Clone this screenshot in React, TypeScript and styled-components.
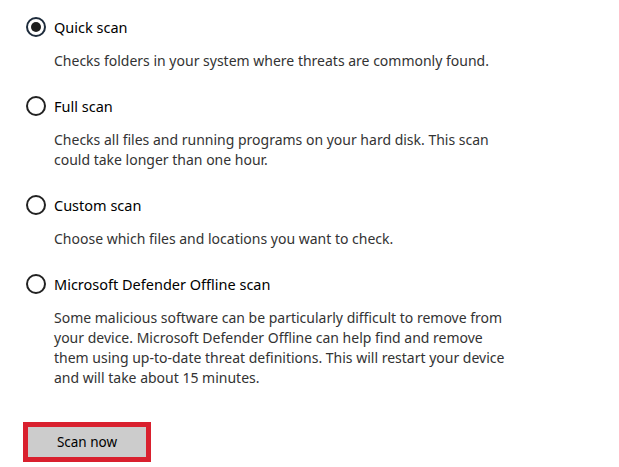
import React from "react";
import styled, { createGlobalStyle } from "styled-components";

const GlobalStyle = createGlobalStyle`
  html, body {
    margin: 0;
    padding: 0;
    background: #ffffff;
  }
  body {
    font-family: "Noto Sans", "Open Sans", sans-serif;
    color: #000;
  }
`;

const Page = styled("div")({
  width: "619px",
  height: "467px",
  boxSizing: "border-box",
  padding: "16px 0 0 26px",
  display: "flex",
  flexDirection: "column",
  backgroundColor: "#fff",
  overflow: "hidden",
});

const Option = styled("div")({
  display: "flex",
  flexDirection: "column",
  marginBottom: "24px",
});

const OptionRow = styled("label")({
  display: "flex",
  alignItems: "center",
  gap: "8px",
  height: "22px",
  fontSize: "14.5px",
  color: "#000",
  cursor: "pointer",
});

const Description = styled("p")({
  margin: "13px 0 0 28px",
  fontSize: "14px",
  lineHeight: "20px",
  color: "#333",
  whiteSpace: "nowrap",
});

const ScanButton = styled("button")({
  marginTop: "10px",
  width: "128px",
  height: "40px",
  marginLeft: "-3px",
  boxSizing: "border-box",
  border: "5px solid #d9202e",
  backgroundColor: "#cccccc",
  fontFamily: "inherit",
  fontSize: "13.5px",
  color: "#000",
  padding: 0,
  cursor: "pointer",
});

const Radio: React.FC<{ checked?: boolean }> = ({ checked }) => (
  <svg width="20" height="20" viewBox="0 0 20 20">
    <circle
      cx="10"
      cy="10"
      r="9"
      fill="none"
      stroke={checked ? "#1e2c3c" : "#222"}
      strokeWidth="2"
    />
    {checked && <circle cx="10" cy="10" r="5" fill="#1e1e1e" />}
  </svg>
);

const options = [
  {
    title: "Quick scan",
    checked: true,
    lines: ["Checks folders in your system where threats are commonly found."],
  },
  {
    title: "Full scan",
    lines: [
      "Checks all files and running programs on your hard disk. This scan",
      "could take longer than one hour.",
    ],
  },
  {
    title: "Custom scan",
    lines: ["Choose which files and locations you want to check."],
  },
  {
    title: "Microsoft Defender Offline scan",
    lines: [
      "Some malicious software can be particularly difficult to remove from",
      "your device. Microsoft Defender Offline can help find and remove",
      "them using up-to-date threat definitions. This will restart your device",
      "and will take about 15 minutes.",
    ],
  },
];

const App: React.FC = () => {
  return (
    <Page>
      <GlobalStyle />
      {options.map((opt) => (
        <Option key={opt.title}>
          <OptionRow>
            <Radio checked={opt.checked} />
            {opt.title}
          </OptionRow>
          <Description>
            {opt.lines.map((line, i) => (
              <React.Fragment key={i}>
                {i > 0 && <br />}
                {line}
              </React.Fragment>
            ))}
          </Description>
        </Option>
      ))}
      <ScanButton>Scan now</ScanButton>
    </Page>
  );
};

export default App;
